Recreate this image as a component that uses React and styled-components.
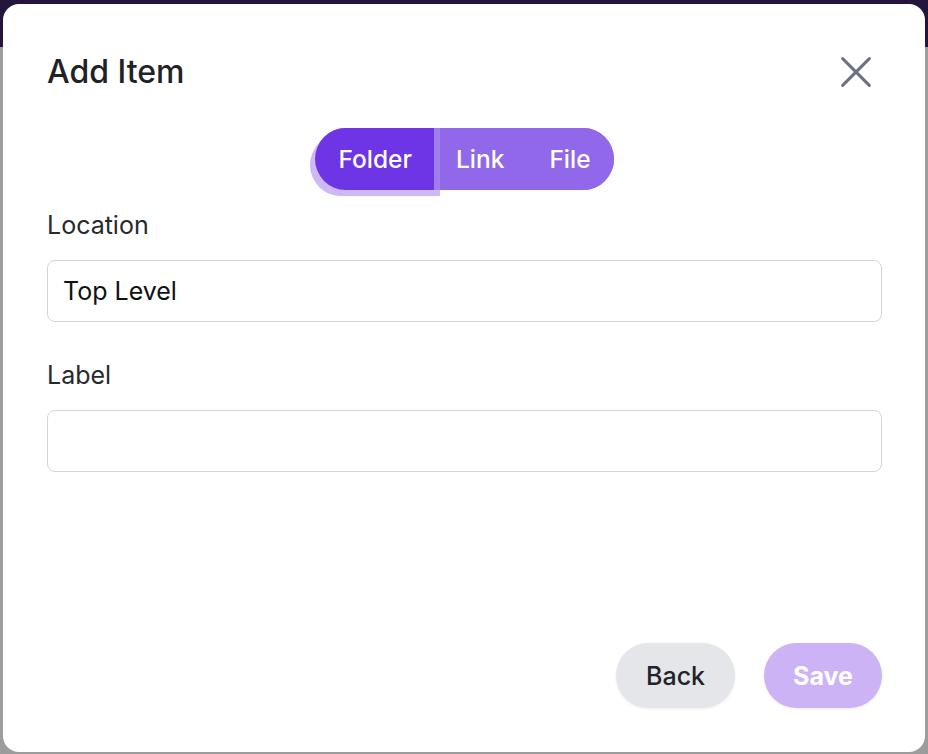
import React, { useState } from "react";
import styled, { createGlobalStyle } from "styled-components";

const GlobalStyle = createGlobalStyle`
  html, body {
    margin: 0;
    padding: 0;
  }
  body {
    font-family: Inter, "Noto Sans", sans-serif;
    background: #9c9c9c;
  }
`;

const Backdrop = styled.div`
  width: 928px;
  height: 754px;
  background: linear-gradient(#24163b 0, #24163b 47px, #9c9c9c 47px);
  padding: 4px 3px 2px 3px;
  box-sizing: border-box;
`;

const Modal = styled.div`
  height: 100%;
  background: #fff;
  border-radius: 16px;
  padding: 46px 43px 44px 44px;
  box-sizing: border-box;
  display: flex;
  flex-direction: column;
`;

const Header = styled.div`
  display: flex;
  align-items: center;
  justify-content: space-between;
`;

const Title = styled.h2`
  margin: 0;
  font-size: 32px;
  font-weight: 500;
  color: #1f2328;
  line-height: 44px;
`;

const CloseButton = styled.button`
  border: none;
  background: none;
  padding: 0;
  width: 40px;
  height: 40px;
  display: flex;
  align-items: center;
  justify-content: center;
  margin-right: 6px;
  cursor: pointer;
`;

const Tabs = styled.div`
  align-self: center;
  display: flex;
  margin-top: 34px;
  background: #9268ea;
  border-radius: 31px;
`;

const Tab = styled.button`
  border: none;
  height: 62px;
  padding: 0 ${(p) => (p.$last ? "23px" : "22px")} 0
    ${(p) => (p.$afterActive ? "16px" : "23px")};
  font-family: inherit;
  font-size: 24.5px;
  font-weight: 500;
  color: #fff;
  background: ${(p) => (p.$active ? "#6d35e6" : "#9268ea")};
  border-radius: ${(p) =>
    p.$active ? "31px 0 0 31px" : p.$last ? "0 31px 31px 0" : "0"};
  box-shadow: ${(p) =>
    p.$active ? "-5px 6px 0 #cdb9f5, 6px 6px 0 #cdb9f5" : "none"};
  border-left: ${(p) => (p.$afterActive ? "6px solid #a07cef" : "none")};
  cursor: pointer;
`;

const Field = styled.div`
  display: flex;
  flex-direction: column;
  margin-top: ${(p) => p.$top}px;
`;

const Label = styled.label`
  font-size: 25px;
  color: #26292e;
  line-height: 30px;
  margin-bottom: 20px;
`;

const Input = styled.input`
  height: 62px;
  box-sizing: border-box;
  border: 1px solid #d3d5db;
  border-radius: 8px;
  padding: 0 15px;
  font-family: inherit;
  font-size: 25px;
  color: #111;
  outline: none;
`;

const Footer = styled.div`
  margin-top: auto;
  display: flex;
  justify-content: flex-end;
  gap: 29px;
`;

const PillButton = styled.button`
  border: none;
  height: 65px;
  padding: 0 ${(p) => (p.$primary ? "29px" : "30px")};
  border-radius: 33px;
  font-family: inherit;
  font-size: 25px;
  font-weight: ${(p) => (p.$primary ? 700 : 500)};
  color: ${(p) => (p.$primary ? "#fff" : "#202328")};
  background: ${(p) => (p.$primary ? "#cbb3f5" : "#e5e6ea")};
  box-shadow: 0 1px 3px rgba(0, 0, 0, 0.08);
  cursor: pointer;
`;

const tabs = ["Folder", "Link", "File"];

export default function App() {
  const [tab, setTab] = useState("Folder");
  const [location, setLocation] = useState("Top Level");
  const [label, setLabel] = useState("");
  const activeIndex = tabs.indexOf(tab);

  return (
    <>
      <GlobalStyle />
      <Backdrop>
        <Modal>
          <Header>
            <Title>Add Item</Title>
            <CloseButton aria-label="Close">
              <svg width="40" height="40" viewBox="0 0 24 24" fill="none" stroke="#6b7280" strokeWidth="1.8" strokeLinecap="round">
                <path d="M4 4l16 16M20 4L4 20" />
              </svg>
            </CloseButton>
          </Header>
          <Tabs>
            {tabs.map((t, i) => (
              <Tab
                key={t}
                $active={tab === t}
                $afterActive={i === activeIndex + 1}
                $last={i === tabs.length - 1}
                onClick={() => setTab(t)}
              >
                {t}
              </Tab>
            ))}
          </Tabs>
          <Field $top={20}>
            <Label>Location</Label>
            <Input value={location} onChange={(e) => setLocation(e.target.value)} />
          </Field>
          <Field $top={38}>
            <Label>Label</Label>
            <Input value={label} onChange={(e) => setLabel(e.target.value)} />
          </Field>
          <Footer>
            <PillButton>Back</PillButton>
            <PillButton $primary>Save</PillButton>
          </Footer>
        </Modal>
      </Backdrop>
    </>
  );
}
